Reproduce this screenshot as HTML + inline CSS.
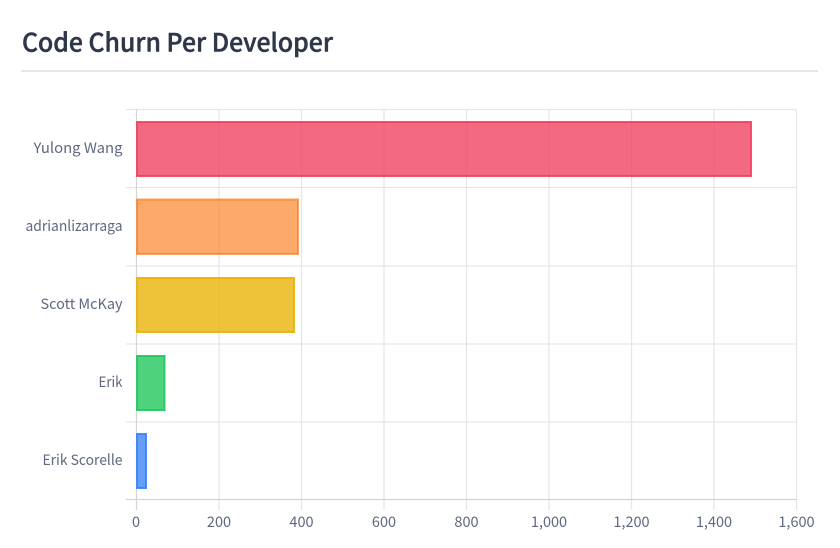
<!DOCTYPE html>
<html lang="en">
<head>
<meta charset="utf-8">
<title>Code Churn Per Developer</title>
<style>
html,body{margin:0;padding:0;background:#fff;width:840px;height:548px;overflow:hidden}
svg{display:block}
text{font-family:"Noto Sans CJK JP","Liberation Sans",sans-serif}
.l{font-size:14.5px;fill:#5f6880;text-anchor:end}
.x{font-size:14.5px;fill:#5f6880;text-anchor:middle}
</style>
</head>
<body>
<svg width="840" height="548" viewBox="0 0 840 548" xmlns="http://www.w3.org/2000/svg">
<text x="22" y="51.5" font-size="25" font-weight="500" fill="#2d3748" stroke="#2d3748" stroke-width=".45" textLength="311" lengthAdjust="spacingAndGlyphs">Code Churn Per Developer</text>
<rect x="21" y="70" width="797" height="2" fill="#e2e8f0"/>
<g stroke="#e6e6e6" stroke-width="1.3" fill="none">
<path d="M126 109.5H796.5M126 187.5H796.5M126 266H796.5M126 344H796.5M126 422H796.5"/>
<path d="M219 109.5V510M301.5 109.5V510M384 109.5V510M466.5 109.5V510M549 109.5V510M631.5 109.5V510M714 109.5V510M796.5 109.5V510"/>
</g>
<path d="M126 499.5H796.5M136.5 109.5V510" stroke="#d4d4d4" stroke-width="1.2" fill="none"/>
<g stroke-width="2">
<rect x="137" y="122" width="614" height="54" fill="rgba(241,60,92,.77)" stroke="rgba(244,63,94,.9)"/>
<rect x="137" y="199.5" width="161" height="54.5" fill="rgba(251,128,36,.68)" stroke="rgba(249,115,22,.65)"/>
<rect x="137" y="278" width="157" height="54" fill="rgba(234,179,8,.8)" stroke="rgba(234,179,8,.9)"/>
<rect x="137" y="356" width="27.5" height="54" fill="rgba(30,197,90,.78)" stroke="rgba(34,197,94,.9)"/>
<rect x="137" y="434" width="9" height="54" fill="rgba(59,130,246,.78)" stroke="rgba(59,130,246,.9)"/>
</g>
<text class="l" x="122.5" y="153" textLength="89" lengthAdjust="spacingAndGlyphs">Yulong Wang</text>
<text class="l" x="122.5" y="231" textLength="97" lengthAdjust="spacingAndGlyphs">adrianlizarraga</text>
<text class="l" x="122.5" y="309" textLength="82" lengthAdjust="spacingAndGlyphs">Scott McKay</text>
<text class="l" x="122.5" y="387" textLength="24" lengthAdjust="spacingAndGlyphs">Erik</text>
<text class="l" x="122.5" y="465" textLength="80" lengthAdjust="spacingAndGlyphs">Erik Scorelle</text>
<text class="x" x="136" y="527">0</text>
<text class="x" x="219" y="527">200</text>
<text class="x" x="301.5" y="527">400</text>
<text class="x" x="384" y="527">600</text>
<text class="x" x="466.5" y="527">800</text>
<text class="x" x="549" y="527">1,000</text>
<text class="x" x="631.5" y="527">1,200</text>
<text class="x" x="714" y="527">1,400</text>
<text class="x" x="796.5" y="527">1,600</text>
</svg>
</body>
</html>
